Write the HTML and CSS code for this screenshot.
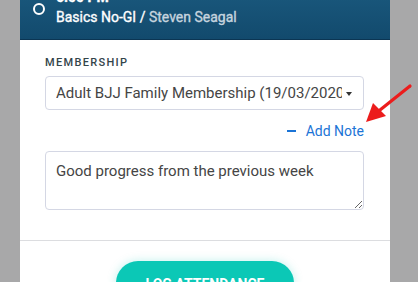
FILE: index.html
```html
<!DOCTYPE html>
<html>
<head>
<meta charset="utf-8">
<link rel="stylesheet" href="styles.css">
</head>
<body>
<div class="modal">
  <div class="header">
    <span class="status-ring"></span>
    <div class="header-text">
      <div class="time">6:00 PM</div>
      <div class="class-line"><span class="class-name">Basics No-GI /</span> <span class="coach">Steven Seagal</span></div>
    </div>
  </div>
  <div class="body">
    <label class="field-label">MEMBERSHIP</label>
    <div class="select-wrap">
      <select class="select">
        <option>Adult BJJ Family Membership (19/03/2020 - 19/03/2021)</option>
      </select>
    </div>
    <div class="note-row">
      <a class="note-link"><span class="minus"></span>Add Note</a>
    </div>
    <textarea class="note">Good progress from the previous week</textarea>
  </div>
  <div class="footer">
    <button class="log-btn">LOG ATTENDANCE</button>
  </div>
</div>
<svg class="pointer" width="60" height="60" viewBox="0 0 60 60">
  <line x1="50" y1="26" x2="20" y2="50" stroke="#ec1c1c" stroke-width="3.2" stroke-linecap="round"/>
  <polygon points="6,62 13,43 26,56" fill="#ec1c1c"/>
</svg>
</body>
</html>
```
FILE: styles.css
```css
html, body {
  margin: 0;
  padding: 0;
  background: #a8a8a9;
  font-family: Roboto, "Liberation Sans", sans-serif;
  height: 282px;
  overflow: hidden;
}
.modal {
  margin: -22px 0 0 20px;
  width: 370px;
  background: #fff;
}
.header {
  display: flex;
  align-items: flex-start;
  padding: 10px 12px 11px 12px;
  background: linear-gradient(#1c5c81, #124a6d);
  border-bottom: 1px solid #0b3553;
  color: #fff;
}
.status-ring {
  width: 8px;
  height: 8px;
  border: 2.5px solid #fff;
  border-radius: 50%;
  margin: 15px 11px 0 1px;
  flex: none;
}
.header-text {
  font-size: 14px;
  font-weight: 400;
  -webkit-text-stroke: 0.35px currentColor;
}
.time {
  font-weight: 700;
  line-height: 18px;
}
.class-line { line-height: 22px; }
.class-name { color: #fff; }
.coach { color: #c6d4df; }
.body {
  padding: 16px 26px 30px 25px;
  border-bottom: 1px solid #dcdde0;
}
.field-label {
  display: block;
  font-size: 11px;
  line-height: 13px;
  font-weight: 500;
  letter-spacing: 0.12em;
  color: #33444a;
}
.select-wrap {
  position: relative;
  margin-top: 7px;
}
.select-wrap::after {
  content: "";
  position: absolute;
  right: 12px;
  top: 16px;
  border-left: 3.5px solid transparent;
  border-right: 3.5px solid transparent;
  border-top: 4px solid #333;
  pointer-events: none;
}
.select {
  appearance: none;
  -webkit-appearance: none;
  display: block;
  width: 100%;
  height: 34px;
  box-sizing: border-box;
  border: 1.5px solid #d4d7e4;
  border-radius: 4px;
  background: #fff;
  padding: 0 21px 0 10px;
  font-family: Roboto, "Liberation Sans", sans-serif;
  font-size: 15px;
  color: #454545;
  outline: none;
}
.note-row {
  display: flex;
  justify-content: flex-end;
  margin-top: 13px;
}
.note-link {
  display: flex;
  align-items: center;
  font-size: 14px;
  line-height: 16px;
  color: #1b74d6;
}
.minus {
  display: inline-block;
  width: 9px;
  height: 2px;
  background: #1b74d6;
  margin-right: 10px;
}
.note {
  display: block;
  margin-top: 12px;
  width: 100%;
  height: 59px;
  box-sizing: border-box;
  border: 1.5px solid #d4d7e4;
  border-radius: 4px;
  padding: 10px 10px;
  font-family: Roboto, "Liberation Sans", sans-serif;
  font-size: 15px;
  line-height: 18px;
  color: #454545;
  resize: vertical;
  outline: none;
}
.footer {
  display: flex;
  justify-content: center;
  padding-top: 20px;
  padding-bottom: 20px;
}
.log-btn {
  width: 178px;
  height: 44px;
  border: none;
  border-radius: 22px;
  background: #0bc8b6;
  color: #fff;
  font-family: Roboto, "Liberation Sans", sans-serif;
  font-size: 14px;
  font-weight: 700;
  padding-top: 2px;
  box-shadow: 0 0 10px rgba(11, 200, 182, 0.25);
}
.pointer {
  position: absolute;
  left: 360px;
  top: 60px;
  overflow: visible;
}
```
